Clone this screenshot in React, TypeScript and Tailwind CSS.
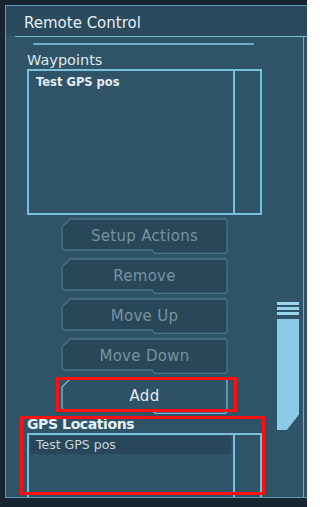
import React from "react";

function Btn({ label, active }: { label: string; active?: boolean }) {
  return (
    <div className="relative w-[167px] h-[36px] shrink-0">
      <svg className="absolute inset-0" width="167" height="36" viewBox="0 0 167 36">
        <path
          d="M1,9 L9,1 H163 Q166,1 166,4 V32.5 Q166,35.5 163,35.5 H96 Q93,35.5 91,32 H4 Q1,32 1,29 Z"
          fill={active ? "#2e5266" : "#284759"}
          stroke={active ? "#7fb4ce" : "#4a7589"}
          strokeWidth="1.3"
        />
      </svg>
      <div
        className={
          "relative h-[32px] pt-[2px] leading-[32px] text-center text-[15px] tracking-[0.3px] " +
          (active ? "text-[#e2eaee]" : "text-[#7793a1]")
        }
      >
        {label}
      </div>
    </div>
  );
}

export default function App() {
  return (
    <div
      className="relative w-[307px] h-[507px] overflow-hidden bg-[#172530] pt-[5px] pl-[5px]"
      style={{ fontFamily: '"DejaVu Sans", "Liberation Sans", sans-serif' }}
    >
      <div className="h-[493px] border-t border-l border-b border-[#5d9ab6] bg-[#2f5468] flex flex-col">
        <div className="h-[30px] shrink-0 bg-[#2a4a5d] pl-[18px] pt-[8px] text-[15px] leading-[18px] text-[#e6eef2]">
          Remote Control
        </div>
        <div className="ml-[9px] h-px shrink-0 bg-[#78bcd8]" />
        <div className="flex-1 min-h-0 flex mr-[3px] border-r border-[#6aaeca] overflow-hidden">
          <div className="w-[265px] shrink-0 flex flex-col">
            <div className="mt-[6px] ml-[27px] w-[221px] h-[3px] border-b-2 border-x-2 border-[#6cb0cc] rounded-b-[2px]" />
            <div className="mt-[7px] ml-[21px] text-[14.5px] leading-[16px] text-[#dde8ee]">Waypoints</div>
            <div className="mt-[1px] ml-[21px] w-[235px] h-[146px] shrink-0 border-2 border-[#78c0dc] flex">
              <div className="w-[204px] pl-[7px] pt-[4px] text-[11.5px] leading-[14px] font-bold text-[#e4ecf0]">
                Test GPS pos
              </div>
              <div className="flex-1 border-l-2 border-[#78c0dc]" />
            </div>
            <div className="mt-[3px] ml-[55px] flex flex-col gap-[4px]">
              <Btn label="Setup Actions" />
              <Btn label="Remove" />
              <Btn label="Move Up" />
              <Btn label="Move Down" />
              <Btn label="Add" active />
            </div>
            <div className="mt-[2px] ml-[21px] text-[14px] leading-[16px] font-bold text-[#e4f2f8] tracking-[-0.4px]">
              GPS Locations
            </div>
            <div className="mt-[1px] ml-[21px] w-[235px] h-[80px] shrink-0 border-2 border-b-0 border-[#78c0dc] flex">
              <div className="w-[204px]">
                <div className="mt-[1px] ml-[1px] w-[201px] h-[18px] bg-[#28475a] pl-[6px] text-[12.5px] leading-[18px] text-[#c9d6dc]">
                  Test GPS pos
                </div>
              </div>
              <div className="flex-1 border-l-2 border-[#78c0dc]" />
            </div>
          </div>
          <div className="flex-1 pl-[6px] pt-[265px]">
            <div className="w-[22px] flex flex-col gap-[2px]">
              <div className="h-[3px] bg-[#9ad3ec]" />
              <div className="h-[3px] bg-[#9ad3ec]" />
              <div className="h-[3px] bg-[#9ad3ec]" />
              <div className="mt-[2px] h-[111px] bg-[#8ccbe8] [clip-path:polygon(0_0,100%_0,100%_86%,45%_100%,0_100%)]" />
            </div>
          </div>
        </div>
      </div>
      <div className="absolute left-[56px] top-[377px] w-[181px] h-[35px] border-[3px] border-[#ff1010]" />
      <div className="absolute left-[20px] top-[416px] w-[245px] h-[79px] border-[3px] border-[#ff1010]" />
    </div>
  );
}
